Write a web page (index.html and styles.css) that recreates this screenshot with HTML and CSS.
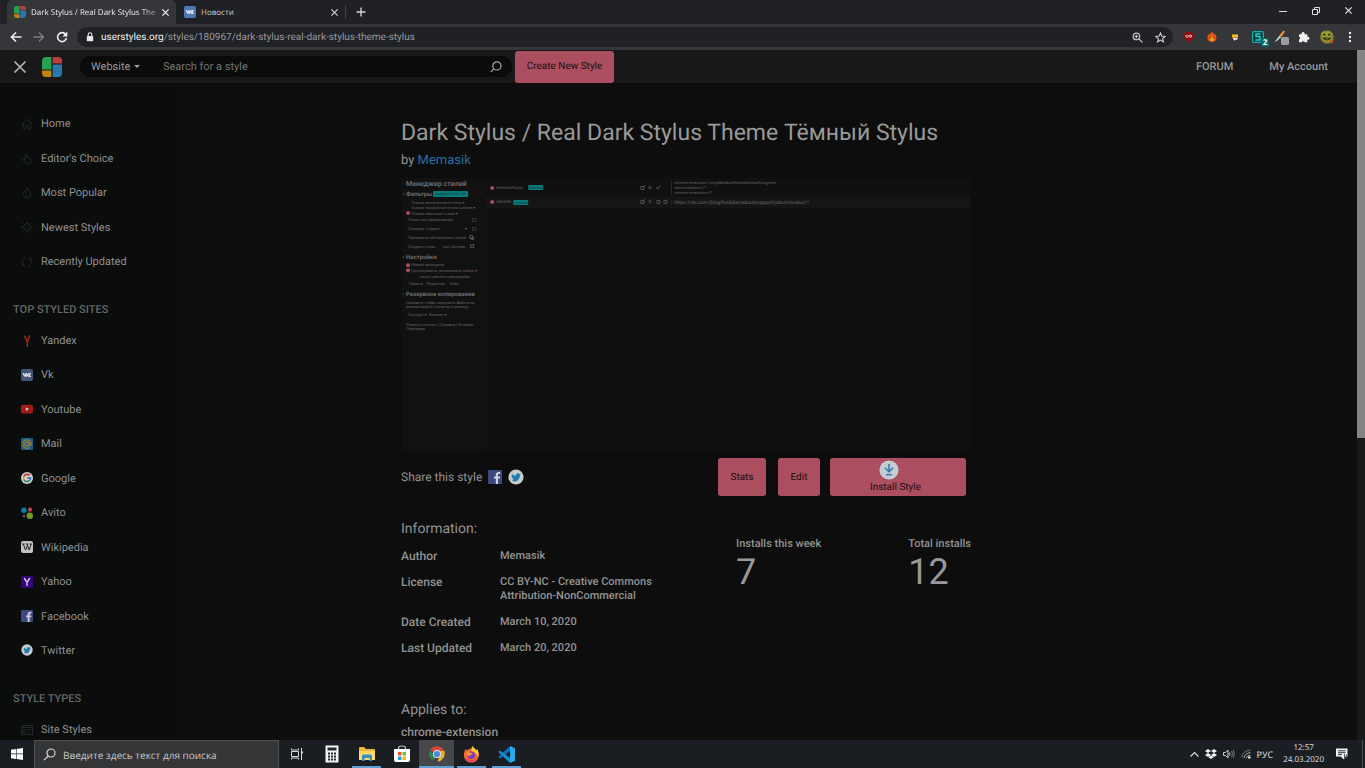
FILE: index.html
```
<!DOCTYPE html>
<html lang="ru">
<head>
<meta charset="utf-8">
<title>Dark Stylus / Real Dark Stylus Theme Тёмный Stylus</title>
<link rel="stylesheet" href="styles.css">
</head>
<body>
<svg class="defs" aria-hidden="true">
  <symbol id="logo" viewBox="0 0 20 20">
    <path d="M4 0h5.4v12.4H0V4a4 4 0 0 1 4-4z" fill="#25a352"/>
    <path d="M10.6 0H16a4 4 0 0 1 4 4v2.4h-9.4z" fill="#ba3e3b"/>
    <path d="M10.600 7.600H20V16a4 4 0 0 1-4 4h-5.400z" fill="#2877ad"/>
    <path d="M0 13.600h9.400V20H4a4 4 0 0 1-4-4z" fill="#c0830f"/>
  </symbol>
  <symbol id="close" viewBox="0 0 10 10"><path d="M1.500 1.500l7 7M8.500 1.500l-7 7" stroke="currentColor" stroke-width="1.400" fill="none"/></symbol>
  <symbol id="vk" viewBox="0 0 12 12">
    <rect width="12" height="12" rx="2" fill="currentColor"/>
    <path d="M1.800 4h1.400c.1 1.200.6 2 1 2.200V4h1.500v1.500c.6-.1 1-.8 1.300-1.500h1.400c-.2.800-.8 1.500-1.200 1.900.6.4 1.200 1.100 1.500 2H7.200c-.3-.7-.8-1.200-1.500-1.300v1.300C3.200 8 1.900 6.500 1.800 4z" fill="#e6e6ea"/>
    <path d="M8.600 4h1.500L8.900 5.900l1.400 2H8.700L7.500 6z" fill="#e6e6ea"/>
  </symbol>
  <symbol id="fb" viewBox="0 0 14 14"><rect width="14" height="14" rx="1" fill="#3c4a80"/><path d="M7.800 14V8.600H6V6.500h1.800V5c0-1.900 1.100-2.900 2.800-2.900h1.600v2H11c-.7 0-1 .4-1 1v1.400h2.100l-.3 2.100H10V14z" fill="#d0d1d8"/></symbol>
  <symbol id="tw" viewBox="0 0 16 16"><circle cx="8" cy="8" r="7.600" fill="#c9cccd"/><path d="M12.900 5.200l-1 .3c.4-.3.600-.6.800-1l-1.200.5a2 2 0 0 0-3.500 1.800C6.300 6.700 4.900 6 3.900 4.800c-.5 1-.2 2.100.6 2.700l-.9-.2c0 1 .7 1.700 1.600 2l-.9.100c.3.700 1 1.300 1.900 1.300-.8.700-1.800 1-2.900.9 3.900 2.300 8.600-.1 8.600-5z" fill="#1d7db1"/></symbol>
</svg>

<header class="tabs">
  <div class="tab tab-active">
    <svg class="fav"><use href="#logo"/></svg><span class="tab-title fade">Dark Stylus / Real Dark Stylus The</span>
    <button class="plain" aria-label="Закрыть вкладку"><svg class="x"><use href="#close"/></svg></button>
  </div>
  <div class="tab">
    <svg class="fav vk-bright"><use href="#vk"/></svg><span class="tab-title">Новости</span>
    <button class="plain" aria-label="Закрыть вкладку"><svg class="x"><use href="#close"/></svg></button>
  </div>
  <button class="plain new-tab" aria-label="Новая вкладка"><svg width="10" height="10" viewBox="0 0 10 10"><path d="M5 .5v9M.5 5h9" stroke="#d4d5d7" stroke-width="1.400"/></svg></button>
  <div class="win">
    <button class="plain" aria-label="Свернуть"><svg width="10" height="10"><path d="M1 5.500h8" stroke="#ddd"/></svg></button>
    <button class="plain" aria-label="Восстановить"><svg width="10" height="10"><path d="M1.500 3.500h5v5h-5zM3.500 3V1.500h5v5H7" fill="none" stroke="#ddd"/></svg></button>
    <button class="plain" aria-label="Закрыть"><svg class="x"><use href="#close"/></svg></button>
  </div>
</header>

<div class="toolbar">
  <button class="plain" aria-label="Назад"><svg width="12" height="12" viewBox="0 0 12 12"><path d="M11.500 6H1.500M6 1.500L1.500 6 6 10.500" fill="none" stroke="#f0f0f0" stroke-width="1.600"/></svg></button>
  <button class="plain" aria-label="Вперёд"><svg width="12" height="12" viewBox="0 0 12 12"><path d="M.5 6h10M6 1.500L10.500 6 6 10.500" fill="none" stroke="#7c7d80" stroke-width="1.400"/></svg></button>
  <button class="plain" aria-label="Обновить"><svg width="12" height="12" viewBox="0 0 12 12"><path d="M9.700 3.400a4.500 4.500 0 1 0 .8 3.600" fill="none" stroke="#f0f0f0" stroke-width="1.600"/><path d="M11.300.6v4.800H6.500z" fill="#f0f0f0"/></svg></button>
  <div class="address">
    <svg width="8" height="10" viewBox="0 0 8 10"><rect x=".8" y="4" width="6.400" height="5.200" rx=".8" fill="#e8e8e8"/><path d="M2.200 4V2.600a1.800 1.800 0 0 1 3.600 0V4" fill="none" stroke="#e8e8e8" stroke-width="1.100"/></svg>
    <span class="url"><b>userstyles.org</b>/styles/180967/dark-stylus-real-dark-stylus-theme-stylus</span>
    <button class="plain" aria-label="Масштаб"><svg width="11" height="11" viewBox="0 0 11 11" fill="none" stroke="#bbbcbe" stroke-width="1.200"><circle cx="4.400" cy="4.400" r="3.300"/><path d="M7 7l3.500 3.500M2.800 4.400H6M4.400 2.800V6"/></svg></button>
    <button class="plain" aria-label="В закладки"><svg width="11" height="11" viewBox="0 0 11 11"><path d="M5.500 1l1.300 3.100 3.400.3-2.600 2.200.8 3.300-2.900-1.800-2.900 1.800.8-3.300L.8 4.400l3.400-.3z" fill="none" stroke="#cfd0d2" stroke-width="1.100"/></svg></button>
  </div>
  <div class="extensions">
    <button class="plain" aria-label="uBlock Origin"><svg width="12" height="12" viewBox="0 0 12 12"><path d="M6 .8l4.800 1.400c.2 4.200-1 7-4.800 9C2.200 9.200 1 6.400 1.200 2.200z" fill="#930a10"/><path d="M3.100 4v1.300q0 1.100 1 1.100t1-1.100V4" fill="none" stroke="#fff" stroke-width=".8"/><circle cx="7.500" cy="5.200" r="1.100" fill="none" stroke="#fff" stroke-width=".8"/></svg></button>
    <button class="plain" aria-label="Огонь"><svg width="12" height="12" viewBox="0 0 12 12"><path d="M6 .8c1 1.500 2.200 1.400 2.800 3.200l1-.8c1.600 3.700.6 7.700-3.800 7.700S.6 7 2.200 3.200l1 .8C3.800 2.200 5 2.300 6 .8z" fill="#e2570c"/><circle cx="6" cy="8" r="2.300" fill="#f09a22"/><path d="M4.200 6.300v1.200m3.600-1.200v1.200" stroke="#56200a"/></svg></button>
    <button class="plain" aria-label="Заметки"><svg width="12" height="12" viewBox="0 0 12 12"><rect x="3" y="3.500" width="6" height="3" fill="#e6c71e"/><path d="M3.500 6.500h5v2.300h-2l-1.300 1z" fill="#eee6dd"/><path d="M3.500 6.500h5" stroke="#e66b25"/></svg></button>
    <button class="plain badge-host" aria-label="Stylus"><svg width="12" height="12" viewBox="0 0 12 12"><rect x=".6" y=".6" width="10.800" height="10.800" rx="1" fill="#073638" stroke="#12aeb0" stroke-width="1.200"/><path d="M8.500 3H4v2.600h4V9H3.500" fill="none" stroke="#18d0cd" stroke-width="1.500"/></svg><span class="badge">2</span></button>
    <button class="plain" aria-label="Кисть"><svg width="16" height="16" viewBox="0 0 16 16"><path d="M10.500 1.500l1.500 1-4 6-2-1.500z" fill="#ee9136"/><path d="M6.300 6.800L8 8.200 4.500 11.500 1.500 13z" fill="#b9d4dc"/><rect x="8" y="8" width="8" height="8" rx="1.500" fill="#9b9ba1"/></svg></button>
    <button class="plain" aria-label="Расширения"><svg width="12" height="12" viewBox="0 0 12 12"><path d="M1 3.200h2.600a1.600 1.600 0 1 1 3 0h2.700v2.500a1.600 1.600 0 1 1 0 3v2.600H6.700a1.600 1.600 0 0 0-3 0H1V8.600a1.500 1.500 0 0 0 0-2.900z" fill="#f2f2f2"/></svg></button>
    <button class="plain" aria-label="Профиль"><svg width="14" height="14" viewBox="0 0 14 14"><circle cx="7" cy="7" r="6.800" fill="#807d24"/><path d="M1 3l3-2 1.500 1.500L8.500 1 12 3.500l-.5 5L9 12H5L2 9z" fill="#a0a02e"/><path d="M3 5.500L4 4l1.500 1.500M8 5.500L9.500 4l1 1.500M3.500 8h7q-3 4-7 0z" fill="none" stroke="#273314" stroke-width="1.200"/><path d="M10.500 10l3-1-1 4-2 .5z" fill="#d25a18"/></svg></button>
    <button class="plain" aria-label="Меню"><svg width="4" height="12" viewBox="0 0 4 12" fill="#eee"><circle cx="2" cy="2" r="1.200"/><circle cx="2" cy="6" r="1.200"/><circle cx="2" cy="10" r="1.200"/></svg></button>
  </div>
</div>

<div class="viewport" lang="en">
  <div class="site">
    <header class="site-head">
      <button class="plain menu-x" aria-label="Close menu"><svg width="14" height="14" viewBox="0 0 14 14"><path d="M1.500 1.500l11 11M12.500 1.500l-11 11" stroke="#b5b5b5" stroke-width="1.700"/></svg></button>
      <a href="#" class="brand" aria-label="Userstyles"><svg width="20" height="20"><use href="#logo"/></svg></a>
      <form class="search">
        <select aria-label="Search in"><option>Website</option></select>
        <svg class="caret" width="6" height="3" viewBox="0 0 6 3"><path d="M0 0h6L3 3z" fill="#a0a0a0"/></svg>
        <input type="text" placeholder="Search for a style" aria-label="Search for a style">
        <button class="plain" type="button" aria-label="Search"><svg width="12" height="12" viewBox="0 0 12 12" fill="none" stroke="#a6a6a6" stroke-width="1.200"><circle cx="6.900" cy="4.900" r="4.100"/><path d="M4 7.800L.8 11"/></svg></button>
      </form>
      <button class="pink create">Create New Style</button>
      <nav class="account"><a href="#">FORUM</a><a href="#">My Account</a></nav>
    </header>
    <div class="columns">
      <nav class="side">
        <ul class="list list-main">
          <li><a href="#"><svg class="ico dim" viewBox="0 0 12 12"><path d="M.8 6.200L6 1.200l5.200 5M2.300 5v6h2.500V7.700h2.400V11h2.500V5"/></svg>Home</a></li>
          <li><a href="#"><svg class="ico dim" viewBox="0 0 12 12"><path d="M4.200 8V2.200q.8-1 1.600 0V5.500l3.700 1q1 .4.700 1.500L9.600 11H5L1.500 7.500q.8-1 2.700.5"/></svg>Editor's Choice</a></li>
          <li><a href="#"><svg class="ico dim" viewBox="0 0 12 12"><path d="M6.200 1C6.500 3 9.800 4.500 9.600 7.800 9.400 10 7.800 11 6 11S2.500 9.800 2.400 7.600C2.400 6 3.200 5 4 4.200c.2 1 .6 1.500 1.200 1.700C5 4 5.200 2.500 6.200 1zM6 7.500Q4.500 9 6 10.500"/></svg>Most Popular</a></li>
          <li><a href="#"><svg class="ico dim" viewBox="0 0 12 12"><circle cx="6" cy="6" r="3.300"/><path d="M6 .3v2M6 9.700v2M.3 6h2M9.700 6h2M2 2l1.400 1.400M8.600 8.600L10 10M10 2L8.600 3.400M3.400 8.600L2 10"/></svg>Newest Styles</a></li>
          <li><a href="#"><svg class="ico dim" viewBox="0 0 12 12"><path d="M5 1.300A4.800 4.800 0 0 0 2.300 9M1 9.300h1.800V7.500M7 10.700A4.800 4.800 0 0 0 9.700 3M11 2.700H9.200v1.800M7.500 1.500l1.500.8M4.500 10.500L3 9.700"/></svg>Recently Updated</a></li>
        </ul>
        <h2>TOP STYLED SITES</h2>
        <ul class="list list-sites">
          <li><a href="#"><svg class="ico" viewBox="0 0 12 12"><path d="M3.500.5L6.300 7v5M8.700.5L6.300 7" fill="none" stroke="#a72b14" stroke-width="1.400"/></svg>Yandex</a></li>
          <li><a href="#"><svg class="ico vk-dim"><use href="#vk"/></svg>Vk</a></li>
          <li><a href="#"><svg class="ico" viewBox="0 0 12 12"><rect y="1.800" width="12" height="8.600" rx="2" fill="#a31919"/><path d="M4.800 4.300L8 6.100 4.800 7.900z" fill="#d5c6c6"/></svg>Youtube</a></li>
          <li><a href="#"><svg class="ico" viewBox="0 0 12 12"><rect width="12" height="12" rx="1" fill="#13608f"/><circle cx="6" cy="6" r="2" fill="none" stroke="#a57a2e" stroke-width="1.300"/><path d="M8 4v3q1.800 1 2.300-1A4.300 4.300 0 1 0 8.500 9.600" fill="none" stroke="#a57a2e" stroke-width="1.200"/></svg>Mail</a></li>
          <li><a href="#"><svg class="ico" viewBox="0 0 12 12"><circle cx="6" cy="6" r="6" fill="#d0d0d0"/><g fill="none" stroke-width="1.600"><path d="M8.600 3.400A3.600 3.600 0 0 0 2.800 4.400" stroke="#bd382f"/><path d="M2.800 4.400a3.600 3.600 0 0 0 0 3.300" stroke="#c99f19"/><path d="M2.800 7.700a3.600 3.600 0 0 0 5.600 1" stroke="#2d8a49"/><path d="M8.400 8.700Q9.600 7.700 9.600 6H6.200" stroke="#376cbd"/></g></svg>Google</a></li>
          <li><a href="#"><svg class="ico" viewBox="0 0 12 12"><circle cx="2.900" cy="3.300" r="2.700" fill="#087eb0"/><circle cx="9" cy="2.700" r="2.100" fill="#b5464b"/><circle cx="3" cy="9" r="1.500" fill="#63448b"/><circle cx="8.800" cy="8.800" r="3.200" fill="#709a1e"/></svg>Avito</a></li>
          <li><a href="#"><svg class="ico" viewBox="0 0 12 12"><rect width="12" height="12" rx="2" fill="#c2c2c2"/><path d="M1.200 3h2.500M5 3h2.300M8.700 3h2.100M2.300 3l2.300 6L6.500 4.500M6 3l2.200 6L10.100 3" fill="none" stroke="#222" stroke-width="1"/></svg>Wikipedia</a></li>
          <li><a href="#"><svg class="ico" viewBox="0 0 12 12"><rect width="12" height="12" rx="1" fill="#35047d"/><path d="M3.200 2L6 6.300 8.800 2M6 6v4" fill="none" stroke="#cfc3df" stroke-width="1.500"/></svg>Yahoo</a></li>
          <li><a href="#"><svg class="ico"><use href="#fb"/></svg>Facebook</a></li>
          <li><a href="#"><svg class="ico"><use href="#tw"/></svg>Twitter</a></li>
        </ul>
        <h2>STYLE TYPES</h2>
        <ul class="list"><li><a href="#"><svg class="ico dim" viewBox="0 0 12 12"><path d="M.5 1.500h11v9H.5zM.5 3.500h11M2 5.500h3v3H2zM7 5.500h3M7 8h2"/></svg>Site Styles</a></li></ul>
      </nav>
      <main class="main">
        <h1>Dark Stylus / Real Dark Stylus Theme Тёмный Stylus</h1>
        <p class="by">by <a href="#">Memasik</a></p>
        <svg class="preview" viewBox="0 0 569 273" lang="ru" role="img" aria-label="Менеджер стилей">
          <rect width="569" height="273" fill="#101010"/>
          <rect width="84" height="273" fill="#111"/>
          <path d="M84 19h485v11H84z" fill="#151515"/>
          <g fill="#696969" font-weight="700"><text class="p7" x="5" y="8">Менеджер стилей</text>
          <g class="p6"><text x="5" y="18">Фильтры</text><text x="5" y="81">Настройки</text><text x="5" y="118">Резервное копирование</text></g></g>
          <g fill="#777"><path d="M2 15l1 1-1 1zM2 78l1 1-1 1zM2 115l1 1-1 1z"/></g>
          <g fill="#087b78"><rect x="32" y="13" width="35" height="6" rx="1"/><rect x="127" y="7" width="15" height="5" rx="1"/><rect x="112" y="22" width="15" height="5" rx="1"/></g>
          <g fill="#a64c5c"><circle cx="7" cy="35" r="2"/><circle cx="7" cy="87" r="2"/><circle cx="7" cy="92" r="2"/><circle cx="91" cy="10" r="2"/><circle cx="91" cy="24" r="2"/></g>
          <g class="p4" fill="#666">
            <text x="10" y="26">Только включенные стили ▾</text><text x="10" y="31">Только локальные стили сайтов ▾</text><text x="10" y="37">Только обычные стили ▾</text>
            <text x="7" y="43">Поиск по содержимому</text><text x="7" y="52">Сначала: старые</text><text x="64" y="52">▾</text><text x="7" y="61">Проверить обновления стилей</text><text x="7" y="70">Создать стиль</text><text x="42" y="70">как Usercss</text>
            <text x="10" y="88">Новый менеджер</text><text x="10" y="94">Группировать, показывать сайты ▾</text><text x="18" y="100">число сайтов в менеджере</text>
            <text x="8" y="107">Правка</text><text x="26" y="107">Редактор</text><text x="48" y="107">Тема</text>
            <text x="5" y="126">Нажмите чтобы загрузить файл или</text><text x="5" y="130">импортируйте стили на страницу</text><text x="7" y="138">Экспорт ▾</text><text x="28" y="138">Импорт ▾</text>
            <text x="5" y="148">Узнать о стилях | Справка | Отзывы</text><text x="5" y="152">Переводы</text>
            <text x="273" y="6">chrome-extension://clngdbkpkpeebahjckkjfobafhncgmne</text><text x="273" y="11">moz-extension://*</text><text x="273" y="16">chrome-extension://*</text>
            <text x="95" y="11">RealDarkStylus</text><text x="95" y="25">VKdARK</text>
          </g>
          <text class="p5" fill="#696969" x="273" y="26">https://vk.com/(blog|feed|dev|about|support|jobs|im|video).*</text>
          <g class="p4" fill="#043e3d"><text x="34" y="17">найдено 2 из 48</text><text x="128" y="11">usercss</text><text x="113" y="26">usercss</text></g>
          <g fill="none" stroke="#626262" stroke-width=".8"><path d="M239.500 8.500h3v3h-3zM242 9l2-2M247 8l3 3M250 8l-3 3M255 9l1 2 3-4"/><path d="M239.500 22.500h3v3h-3zM242 23l2-2M247 22l3 3M250 22l-3 3M255.500 22.500h3v3h-3zM262.500 22.500h3v3h-3z"/><path d="M68.500 57.500h3v3h-3zM70.500 59.500h2v2h-2zM69.500 66.500h3v3h-3z"/></g>
          <path d="M71.500 40.500h3v3h-3zM71.500 49.500h3v3h-3z" fill="none" stroke="#333"/>
          <path d="M270 2v15M270 22v5" stroke="#292929"/>
        </svg>
        <div class="actions">
          <div class="share"><span>Share this style</span><a href="#" aria-label="Facebook"><svg width="14" height="14"><use href="#fb"/></svg></a><a href="#" aria-label="Twitter"><svg width="16" height="16"><use href="#tw"/></svg></a></div>
          <button class="pink stats">Stats</button>
          <button class="pink edit">Edit</button>
          <button class="pink install"><svg width="20" height="20" viewBox="0 0 20 20"><circle cx="10" cy="10" r="9.600" fill="#c6cbd0"/><path d="M10 4v7.500M6 7.800l4 4 4-4M7 14.800h6" fill="none" stroke="#2d7fb5" stroke-width="1.600"/></svg>Install Style</button>
        </div>
        <div class="details">
          <section>
            <h3>Information:</h3>
            <dl>
              <dt>Author</dt><dd>Memasik</dd>
              <dt>License</dt><dd>CC BY-NC - Creative Commons<br>Attribution-NonCommercial</dd>
              <dt>Date Created</dt><dd>March 10, 2020</dd>
              <dt>Last Updated</dt><dd>March 20, 2020</dd>
            </dl>
          </section>
          <section class="counts">
            <div><h4>Installs this week</h4><strong>7</strong></div>
            <div><h4>Total installs</h4><strong>12</strong></div>
          </section>
        </div>
        <section class="applies"><h3>Applies to:</h3><p>chrome-extension</p></section>
      </main>
    </div>
  </div>
  <div class="scroll"><div class="thumb"></div></div>
</div>

<footer class="taskbar">
  <button class="plain start" aria-label="Пуск"><svg width="12" height="12" viewBox="0 0 12 12" fill="#fff"><path d="M0 1.700l5-.7v4.600H0zM5.600.9L12 0v5.600H5.600zM0 6.300h5v4.600l-5-.6zM5.600 6.300H12V12l-6.400-.9z"/></svg></button>
  <label class="task-search"><svg width="13" height="13" viewBox="0 0 13 13" fill="none" stroke="#d8d8d8" stroke-width="1.200"><circle cx="8" cy="5" r="4"/><path d="M5.200 8L1 12.200"/></svg><input type="text" placeholder="Введите здесь текст для поиска" aria-label="Поиск"></label>
  <div class="apps">
    <button class="plain" aria-label="Представление задач"><svg width="14" height="14" viewBox="0 0 14 14" fill="none" stroke="#d4d6d8"><path d="M1.500 1.500V3h7V1.500M1.500 4.500h7v5h-7zM1.500 12.500V11h7v1.500M11.500 1v12"/><path d="M11 5.500h2" stroke-width="2"/></svg></button>
    <button class="plain" aria-label="Калькулятор"><svg width="14" height="18" viewBox="0 0 14 18"><path d="M.5.500h13v17H.5z" fill="#f5f5f5"/><path d="M2.500 2.500h9v3h-9z" fill="#252a30"/><path d="M3 8.500h8M3 11.500h8M3 14.500h8" stroke="#252a30" stroke-width="2" stroke-dasharray="2 1"/></svg></button>
    <button class="plain running" aria-label="Проводник"><svg width="16" height="14" viewBox="0 0 16 14"><path d="M0 1q0-1 1-1h4l2 2h8q1 0 1 1v10H0z" fill="#efb634"/><path d="M0 4h16v9H0z" fill="#ffda6b"/><path d="M3 14V9q0-1.500 1.500-1.500h7Q13 7.500 13 9v5h-2.500v-3h-5v3z" fill="#3a8fc5"/></svg></button>
    <button class="plain" aria-label="Microsoft Store"><svg width="18" height="18" viewBox="0 0 18 18"><path d="M5.500 5V3q0-2 3.500-2t3.500 2v2" fill="none" stroke="#c4c8cc" stroke-width="1.200"/><path d="M1 4h16v11q0 2-2 2H3q-2 0-2-2z" fill="#fff"/><path d="M5 7h3.500v3.500H5z" fill="#e8542d"/><path d="M9.500 7H13v3.500H9.500z" fill="#7eb928"/><path d="M5 11.500h3.500V15H5z" fill="#21a2e0"/><path d="M9.500 11.500H13V15H9.500z" fill="#f7b91d"/></svg></button>
    <button class="plain running current" aria-label="Chrome"><svg width="16" height="16" viewBox="0 0 16 16"><path d="M1 4.500a8 8 0 0 1 14 0L16 7H8z" fill="#d94835"/><path d="M1 4.500a8 8 0 0 0 2 9.500l3-1-1.200-4.500z" fill="#298749"/><path d="M15.300 5H9l2 3.500-2.500 7A8 8 0 0 0 15.300 5z" fill="#e4b334"/><circle cx="8" cy="8" r="4" fill="#e1e3e4"/><circle cx="8" cy="8" r="3.100" fill="#4b86e6"/></svg></button>
    <button class="plain running" aria-label="Firefox"><svg width="17" height="17" viewBox="0 0 17 17"><path d="M9.500 0c1 2 2.800 2.800 3.800 4.500l.9-1.500c3 5.500 1.500 13.500-5.700 13.500S-1 9.500 2.500 3l1 1.500C5 3 8.500 3.500 9.500 0z" fill="#f36b2d"/><path d="M9.500 0c1 2 2.800 2.800 3.800 4.500l.9-1.500c1.500 3 1.800 5.500 1 8-1-3-3-5-6.700-6z" fill="#ffce32"/><circle cx="8.300" cy="9.300" r="3.800" fill="#843bba"/><path d="M3 7q4-2 7 1-2 0-2.500 1.500-3 1.500-4.500-2.500z" fill="#ff9438"/><path d="M2 11q5 6 12 1-3 5-7 4t-5-5z" fill="#ee3971"/></svg></button>
    <button class="plain running" aria-label="VS Code"><svg width="17" height="17" viewBox="0 0 17 17"><path d="M12 0l5 2.200v12.600L12 17z" fill="#29a8ec"/><path d="M12 0v5L2.200 12.600.3 11z" fill="#0a72b7"/><path d="M12 17v-5L2.200 4.400.3 6z" fill="#178bd0"/></svg></button>
  </div>
  <div class="tray">
    <svg width="9" height="6" viewBox="0 0 9 6"><path d="M.5 5.500l4-4 4 4" fill="none" stroke="#ddd" stroke-width="1.200"/></svg>
    <svg width="12" height="10" viewBox="0 0 12 10" fill="#f2f2f2"><path d="M3 0l3 2-3 2-3-2zM9 0l3 2-3 2-3-2zM3 4l3 2-3 2-3-2zM9 4l3 2-3 2-3-2zM6 6.600l2.700 1.700L6 10 3.300 8.300z"/></svg>
    <svg width="12" height="10" viewBox="0 0 12 10" fill="none" stroke="#ccc"><path d="M.5 3.500h2l2.500-2.500v8L2.500 6.500h-2zM6.500 3.500q1 1.500 0 3"/><path d="M8.500 2q2 3 0 6M10.300.8q2 4.200 0 8.400" stroke="#777"/></svg>
    <svg width="10" height="10" viewBox="0 0 10 10" fill="none"><path d="M.7 8.500Q1.500 2 9.500 1" stroke="#777"/><path d="M3 9Q3.500 4.500 9.500 3.500M5.200 9.200Q5.800 6.500 9.500 6" stroke="#aaa"/><circle cx="8.300" cy="8.500" r="1.300" fill="#eee"/></svg>
    <span class="lang">РУС</span>
    <time class="clock" datetime="2020-03-24T12:57">12:57<br>24.03.2020</time>
    <svg class="note" width="12" height="12" viewBox="0 0 12 12"><path d="M0 .5h11.500v8H8v3L4.500 8.500H0z" fill="#f2f2f2"/><path d="M2 2.800h7.500M2 4.700h7.500M2 6.600h4" stroke="#333"/><path d="M8.500 6v5M8.500 9.500q3 1.500 2-3" stroke="#555" fill="none"/></svg>
    <i class="desk-edge"></i>
  </div>
</footer>
</body>
</html>
```
FILE: styles.css
```
* { box-sizing: border-box; }
html, body { height: 100%; }
body {
  margin: 0;
  display: flex;
  flex-direction: column;
  overflow: hidden;
  background: #0d0d0d;
  color: #999;
  font-family: "Open Sans", "Noto Sans", sans-serif;
  font-size: 9px;
  text-rendering: geometricPrecision;
}
.defs { position: absolute; width: 0; height: 0; }
svg { display: block; flex: none; }
a { color: inherit; text-decoration: none; }
h1, h2, h3, h4, p, ul, dl, dd { margin: 0; padding: 0; font-weight: 400; }
ul { list-style: none; }
button, input, select { font: inherit; color: inherit; text-rendering: inherit; border: 0; padding: 0; background: none; outline: 0; }
.plain { display: flex; align-items: center; justify-content: center; flex: none; }

/* Tab strip */
.tabs { display: flex; height: 24px; flex: none; padding-left: 7px; background: #202125; color: #c8c9cb; font-size: 8px; }
.tab { display: flex; align-items: center; width: 169px; padding: 0 6px 0 8px; border-radius: 5px 5px 0 0; }
.tab + .tab { border-right: 1px solid #45464a; border-radius: 0; width: 170px; height: 14px; margin-top: 5px; }
.tab-active { background: #35363a; color: #eee; padding-left: 7px; }
.fav { width: 12px; height: 12px; margin-right: 5px; }
.vk-bright { color: #4d79b3; }
.vk-dim { color: #405776; }
.tab-title { flex: 1; min-width: 0; white-space: nowrap; }
.fade { mask-image: linear-gradient(to right, #000 84%, #0006); margin-right: 4px; }
.x { width: 9px; height: 9px; }
.new-tab { width: 30px; }
.win { display: flex; margin-left: auto; height: 21px; }
.win button { width: 33px; color: #ddd; }

/* Address toolbar */
.toolbar { display: flex; align-items: center; flex: none; height: 26px; padding: 0 4px; background: #35363a; }
.toolbar > .plain { width: 23px; }
.address { flex: 1; display: flex; align-items: center; height: 20px; margin-left: 4px; padding: 0 1px 0 9px; border-radius: 10px; background: #202125; }
.url { flex: 1; margin-left: 7px; color: #96989b; font-family: Roboto, sans-serif; font-size: 10px; white-space: nowrap; }
.url b { font-weight: 400; color: #f0f0f0; }
.address .plain { width: 23px; }
.extensions { display: flex; margin-left: 4px; }
.extensions .plain { width: 23px; height: 20px; }
.badge-host { position: relative; }
.badge { position: absolute; right: 0; bottom: 0; width: 8px; height: 9px; border-radius: 2px; background: #086a66; color: #fff; font-size: 8px; line-height: 9px; font-weight: 700; }

/* Web page */
.viewport { flex: 1; min-height: 0; display: flex; font-family: Roboto, "Liberation Sans", sans-serif; }
.site { flex: 1; min-width: 0; overflow: hidden; }
.scroll { width: 8px; background: #17181a; }
.thumb { height: 388px; background: #858383; }
.site-head { display: flex; align-items: center; height: 33px; padding-left: 13px; background: #181818; font-size: 11px; }
.brand { margin: 0 18px 0 15px; }
.search { display: flex; align-items: center; width: 432px; height: 21px; padding: 0 10px 0 11px; border-radius: 10px; background: #0b0b0b; }
.search select { width: 41px; appearance: none; color: #999; }
.caret { margin: 0 23px 0 2px; }
.search input { flex: 1; min-width: 0; }
.search input::placeholder { color: #737373; }
.pink { border-radius: 3px; background: #ab4f60; color: #1d0c10; font-size: 10px; }
.create { width: 99px; height: 32px; margin-left: 3px; }
.account { display: flex; gap: 36px; margin-left: auto; padding-right: 29px; font-weight: 500; }
.columns { display: flex; }
.side { width: 179px; flex: none; padding: 30px 0 0 21px; background: #0b0c0c; font-size: 11px; font-weight: 500; color: #8f8f8f; }
.list { display: flex; flex-direction: column; justify-content: space-between; }
.list-main { height: 159px; }
.list-sites { height: 331px; }
.list a { display: flex; align-items: center; height: 21px; gap: 8px; }
.ico { width: 12px; height: 12px; }
.dim { fill: none; stroke: #24282a; stroke-width: 1; }
.side h2 { margin: 27px 0 10px -8px; font-size: 11px; line-height: 21px; font-weight: 500; color: #626768; }
.main { flex: 1; min-width: 0; padding: 35px 40px 0 222px; color: #929292; }
.main > * { max-width: 570px; }
.main h1 { font-size: 23px; line-height: 30px; color: #999; white-space: nowrap; }
.by { margin-top: 3px; font-size: 13px; line-height: 20px; }
.by a { color: #25709f; }
.preview { width: 100%; height: auto; margin-top: 7px; }
.p7 { font-size: 7px; }
.p6 { font-size: 6px; }
.p5 { font-size: 5px; }
.p4 { font-size: 4px; }
.actions { display: flex; align-items: center; margin-top: 7px; padding-right: 5px; }
.actions .pink { height: 38px; }
.share { display: flex; align-items: center; gap: 6px; margin-right: auto; font-size: 12px; font-weight: 400; }
.stats { width: 48px; }
.edit { width: 42px; margin: 0 10px 0 12px; }
.install { display: flex; flex-direction: column; align-items: center; justify-content: flex-start; width: 136px; padding: 2px 5px 0 0; line-height: 16px; }
.install svg { margin-right: 13px; }
.details { display: flex; justify-content: space-between; margin-top: 23px; }
.main h3 { font-size: 14px; line-height: 20px; }
.details dl { display: grid; grid-template-columns: 99px auto; row-gap: 12px; margin-top: 10px; }
.details dt { font-size: 12px; line-height: 14px; font-weight: 500; }
.details dd { font-size: 11px; line-height: 14px; font-weight: 500; }
.counts { display: flex; gap: 87px; padding-top: 18px; }
.counts h4 { font-size: 11px; line-height: 14px; font-weight: 500; }
.counts strong { display: block; font-size: 36px; line-height: 42px; font-weight: 400; color: #999; }
.applies { margin-top: 45px; }
.applies p { margin-top: 4px; font-size: 12px; line-height: 16px; font-weight: 500; }

/* Taskbar */
.taskbar { display: flex; align-items: stretch; flex: none; height: 28px; background: #1a1d22; color: #e0e0e0; }
.start { width: 34px; }
.task-search { display: flex; align-items: center; gap: 7px; width: 245px; padding-left: 8px; border: 1px solid #505152; border-bottom: 0; background: #343536; }
.task-search input { flex: 1; min-width: 0; font-size: 10px; }
.task-search input::placeholder { color: #c8c8c8; }
.apps { display: flex; }
.apps .plain { width: 35px; }
.apps .running { border-top: 2px solid transparent; border-bottom: 2px solid #5f9fd8; margin: 0 3px; width: 29px; }
.apps .current { background: #45474a; margin: 0; width: 35px; }
.tray { display: flex; align-items: center; gap: 6px; margin-left: auto; }
.clock { margin-left: 4px; text-align: center; line-height: 12px; font-size: 8px; }
.note { margin-left: 6px; }
.desk-edge { width: 3px; height: 28px; margin-left: 8px; border-left: 1px solid #4a4c50; }
```
